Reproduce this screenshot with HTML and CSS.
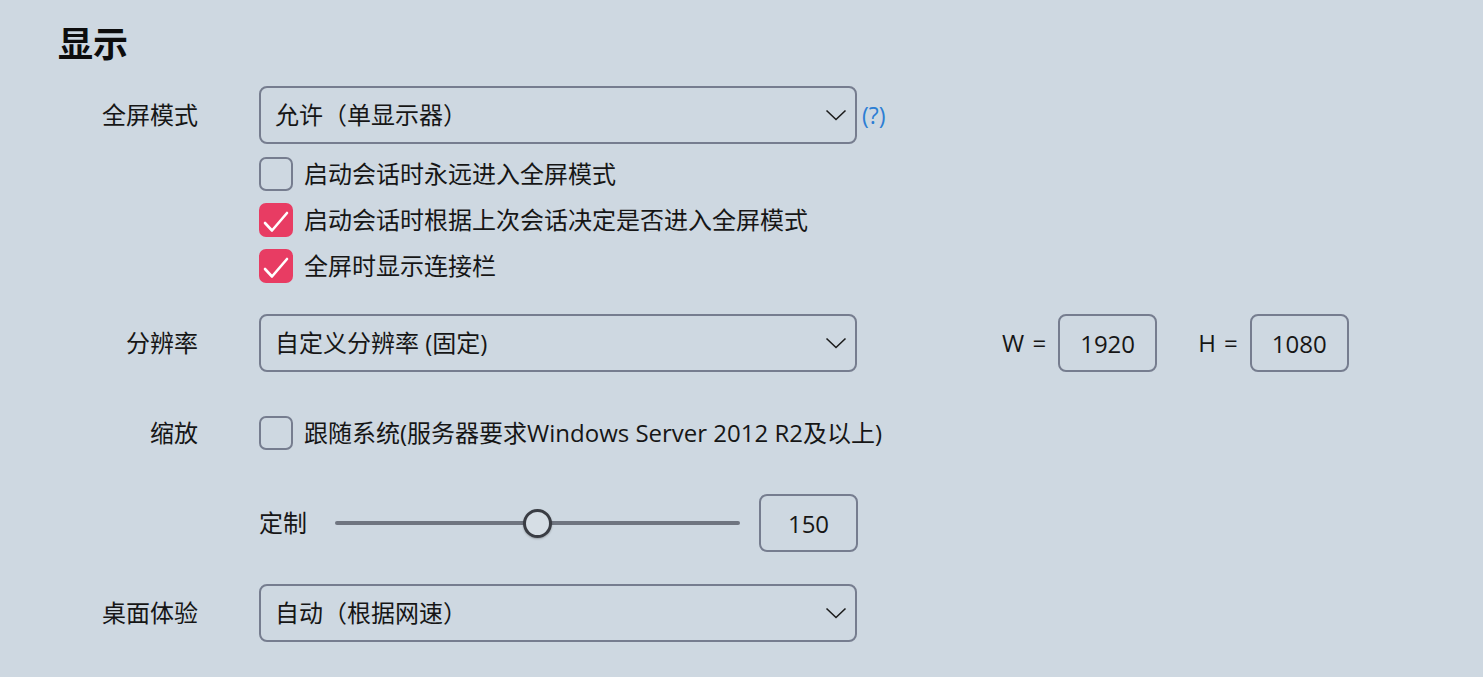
FILE: index.html
```html
<!DOCTYPE html>
<html lang="zh">
<head>
<meta charset="utf-8">
<link rel="stylesheet" href="styles.css">
</head>
<body>
<div class="page">
  <h1 class="title">显示</h1>

  <div class="row row-fullscreen">
    <div class="label">全屏模式</div>
    <div class="field">
      <div class="select">
        <span>允许（单显示器）</span>
        <svg class="caret" width="22" height="12" viewBox="0 0 22 12"><path d="M1.5 1.5 L11 10.5 L20.5 1.5" fill="none" stroke="#1c1c1c" stroke-width="1.6"/></svg>
      </div>
      <span class="help">(?)</span>
    </div>
  </div>

  <div class="checks">
    <div class="check-row">
      <span class="box"></span>
      <span class="ctext">启动会话时永远进入全屏模式</span>
    </div>
    <div class="check-row">
      <span class="box on"><svg width="34" height="34" viewBox="0 0 34 34"><path d="M6 20 L13 27.5 L28 10" fill="none" stroke="#fff" stroke-width="2.6" stroke-linecap="round" stroke-linejoin="round"/></svg></span>
      <span class="ctext">启动会话时根据上次会话决定是否进入全屏模式</span>
    </div>
    <div class="check-row">
      <span class="box on"><svg width="34" height="34" viewBox="0 0 34 34"><path d="M6 20 L13 27.5 L28 10" fill="none" stroke="#fff" stroke-width="2.6" stroke-linecap="round" stroke-linejoin="round"/></svg></span>
      <span class="ctext">全屏时显示连接栏</span>
    </div>
  </div>

  <div class="row row-res">
    <div class="label">分辨率</div>
    <div class="field">
      <div class="select">
        <span>自定义分辨率 (固定)</span>
        <svg class="caret" width="22" height="12" viewBox="0 0 22 12"><path d="M1.5 1.5 L11 10.5 L20.5 1.5" fill="none" stroke="#1c1c1c" stroke-width="1.6"/></svg>
      </div>
      <div class="dims">
        <span class="dlabel">W =</span>
        <div class="numbox">1920</div>
        <span class="dlabel hlabel">H =</span>
        <div class="numbox">1080</div>
      </div>
    </div>
  </div>

  <div class="row row-scale">
    <div class="label">缩放</div>
    <div class="field">
      <div class="check-row">
        <span class="box"></span>
        <span class="ctext">跟随系统(服务器要求Windows Server 2012 R2及以上)</span>
      </div>
    </div>
  </div>

  <div class="row row-slider">
    <div class="label"></div>
    <div class="field">
      <span class="slabel">定制</span>
      <div class="slider">
        <div class="track"></div>
        <div class="thumb"></div>
      </div>
      <div class="numbox small">150</div>
    </div>
  </div>

  <div class="row row-desktop">
    <div class="label">桌面体验</div>
    <div class="field">
      <div class="select">
        <span>自动（根据网速）</span>
        <svg class="caret" width="22" height="12" viewBox="0 0 22 12"><path d="M1.5 1.5 L11 10.5 L20.5 1.5" fill="none" stroke="#1c1c1c" stroke-width="1.6"/></svg>
      </div>
    </div>
  </div>
</div>
</body>
</html>
```

FILE: styles.css
```css
html, body {
  margin: 0;
  padding: 0;
  background: #ced8e1;
}
body {
  width: 1483px;
  height: 677px;
  overflow: hidden;
  font-family: "Open Sans", "Noto Sans CJK SC", sans-serif;
  color: #161616;
  font-size: 24px;
}
.page {
  padding-left: 58px;
  padding-top: 20px;
}
.title {
  margin: 0;
  font-family: "Noto Sans CJK SC", sans-serif;
  font-size: 35px;
  line-height: 44px;
  font-weight: 700;
  color: #0d0d0d;
}
.row {
  display: grid;
  grid-template-columns: 140px 1fr;
  column-gap: 61px;
  align-items: center;
}
.label {
  text-align: right;
  line-height: 30px;
}
.field {
  display: flex;
  align-items: center;
}
.row-fullscreen { margin-top: 22px; }
.select {
  box-sizing: border-box;
  width: 598px;
  height: 58px;
  border: 2px solid #767d8f;
  border-radius: 8px;
  display: flex;
  align-items: center;
  justify-content: space-between;
  padding: 0 8px 0 14px;
}
.select span { line-height: 30px; }
.caret { margin-right: 0; }
.help {
  color: #2c7ed4;
  margin-left: 5px;
  font-size: 23px;
  line-height: 30px;
}
.checks {
  margin-top: 13px;
  margin-left: 201px;
  display: flex;
  flex-direction: column;
  gap: 12px;
}
.check-row {
  display: flex;
  align-items: center;
  height: 34px;
}
.box {
  box-sizing: border-box;
  width: 34px;
  height: 34px;
  border: 2px solid #767d8f;
  border-radius: 7px;
  flex: none;
  display: block;
}
.box.on {
  border: none;
  background: #e83c63;
}
.box svg { display: block; }
.ctext {
  margin-left: 11px;
  line-height: 30px;
}
.row-res { margin-top: 31px; }
.dims {
  display: flex;
  align-items: center;
  margin-left: 145px;
}
.dlabel {
  margin-right: 12px;
  line-height: 30px;
  word-spacing: 2px;
}
.hlabel { margin-left: 41px; }
.numbox {
  box-sizing: border-box;
  width: 99px;
  height: 58px;
  border: 2px solid #767d8f;
  border-radius: 8px;
  display: flex;
  align-items: center;
  justify-content: center;
}
.row-scale { margin-top: 44px; }
.row-slider { margin-top: 44px; }
.slabel {
  line-height: 30px;
  width: 76px;
  flex: none;
}
.slider {
  position: relative;
  width: 405px;
  height: 58px;
  flex: none;
}
.track {
  position: absolute;
  left: 0;
  right: 0;
  top: 27px;
  height: 4px;
  border-radius: 2px;
  background: #6f7580;
}
.thumb {
  position: absolute;
  left: 188px;
  top: 15px;
  box-sizing: border-box;
  width: 29px;
  height: 29px;
  border-radius: 50%;
  border: 3px solid #3a3d44;
  background: #d6dee5;
  box-shadow: 0 1px 2px rgba(0,0,0,0.25);
}
.numbox.small { margin-left: 19px; }
.row-desktop { margin-top: 32px; }
```
